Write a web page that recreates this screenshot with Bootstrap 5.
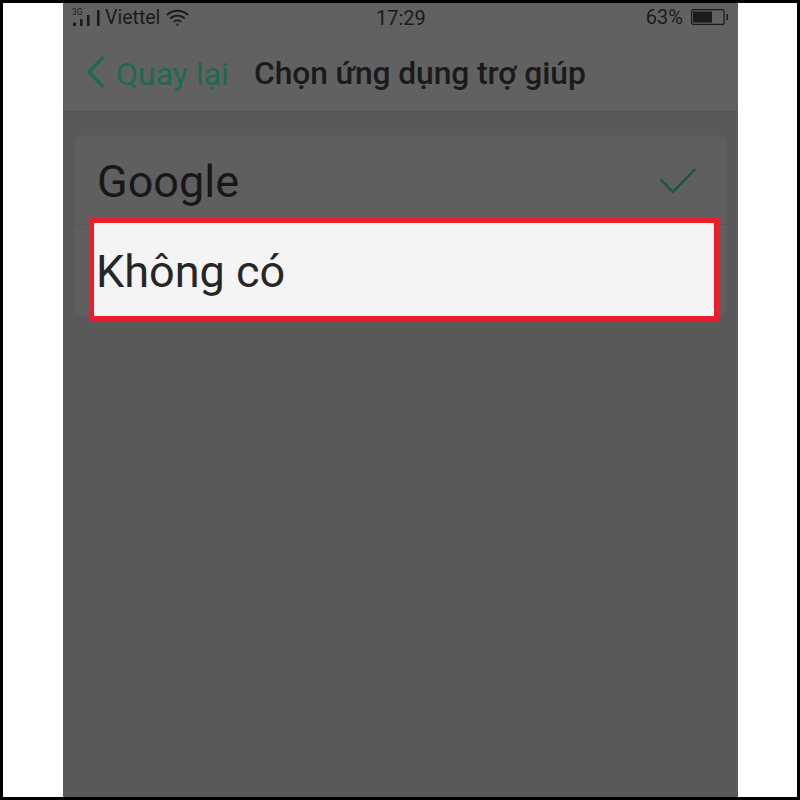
<!DOCTYPE html>
<html lang="vi">
<head>
<meta charset="utf-8">
<title>Chọn ứng dụng trợ giúp</title>
<link href="https://cdn.jsdelivr.net/npm/bootstrap@5.3.0/dist/css/bootstrap.min.css" rel="stylesheet">
<style>
html,body{margin:0;height:800px;overflow:hidden;background:#fff}
body{font-family:Roboto,"Liberation Sans",sans-serif}
.shot{width:800px;height:800px;border:3px solid #000;background:#fff;padding:0 59px 0 60px}
.phone{height:794px;background:#595959;color:#1b1b1b}
.tophead{background:#616161;border-bottom:1px solid #545454;height:109px}
.statusbar{height:28px;padding:0 10px 0 9px;line-height:28px}
.leftstat{width:304px}
.carrier{font-size:19.5px;margin:2px 6px 0 3px}
.wifiicon{margin-top:2px}
.clock{font-size:20px;margin-top:2px}
.batt{font-size:20px}
.navrow{height:80px;padding:6px 0 0 23px}
.backlink{color:#1d6a50;font-size:32px;width:168px;gap:10px}
.backlink svg{margin-bottom:4px}
.apptitle{font-size:31.8px;font-weight:500;color:#1a1a1a;letter-spacing:-.1px}
.listwrap{padding:24px 12px 0}
.optcard{background:#5f5f5f;border-radius:7px;height:179px;box-shadow:0 0 0 1px #5b5b5b}
.optrow{height:89px;padding:2px 30px 0 22px;font-size:45px;line-height:1;border-bottom:1px solid #585858;color:#171717}
.optpick{height:103px;margin:-7px 7px 0 14px;padding:3px 0 0 2px;background:#f4f4f4;border:5px solid #ed1c2b;font-size:45px;line-height:1;color:#262626}
</style>
</head>
<body>
<div class="shot">
  <div class="phone">
    <div class="tophead">
      <div class="statusbar d-flex align-items-center">
        <div class="leftstat d-flex align-items-center">
          <svg width="30" height="22" viewBox="0 0 30 22" fill="#1b1b1b" aria-hidden="true">
            <text x="0" y="9" font-family="Roboto,sans-serif" font-size="8.500">3G</text>
            <rect x="1" y="16.500" width="3" height="3.500"/><rect x="8" y="13" width="2.500" height="7"/><rect x="15" y="9" width="2.500" height="11"/><rect x="25" y="4" width="2.500" height="16"/>
          </svg>
          <span class="carrier">Viettel</span>
          <svg class="wifiicon" width="23" height="18" viewBox="0 0 24 18" fill="none" stroke="#1b1b1b" stroke-width="2" aria-hidden="true">
            <path d="M1 6c6-6 16-6 22 0M4.500 9.500c4-4 11-4 15 0M8 13c2-2 6-2 8 0"/><circle cx="12" cy="16" r="1.200" fill="#1b1b1b" stroke="none"/>
          </svg>
        </div>
        <span class="clock">17:29</span>
        <div class="batt d-flex align-items-center gap-2 ms-auto">
          <span>63%</span>
          <svg width="37" height="16" viewBox="0 0 37 16" aria-hidden="true">
            <rect x=".6" y=".6" width="32.500" height="14.800" rx="2" fill="none" stroke="#1b1b1b" stroke-width="1.200"/>
            <rect x="2" y="2.500" width="19" height="11" fill="#1b1b1b"/>
            <rect x="35.500" y="5" width="1.500" height="6" fill="#1b1b1b"/>
          </svg>
        </div>
      </div>
      <div class="navrow d-flex align-items-center">
        <div class="backlink d-flex align-items-center">
          <svg width="20" height="34" viewBox="0 0 20 34" fill="none" stroke="#1d6a50" stroke-width="3.500" aria-hidden="true"><path d="M17.500 2 3 17l14.500 15"/></svg>
          <span>Quay lại</span>
        </div>
        <div class="apptitle">Chọn ứng dụng trợ giúp</div>
      </div>
    </div>
    <div class="listwrap">
      <div class="optcard">
        <div class="optrow d-flex align-items-center justify-content-between">
          <span>Google</span>
          <svg width="36" height="26" viewBox="0 0 36 26" fill="none" stroke="#1c5640" stroke-width="2.500" aria-hidden="true"><path d="M.8 11.500 13 24 35.200 1"/></svg>
        </div>
        <div class="optpick d-flex align-items-center">Không có</div>
      </div>
    </div>
  </div>
</div>
<script src="https://cdn.jsdelivr.net/npm/bootstrap@5.3.0/dist/js/bootstrap.bundle.min.js"></script>
</body>
</html>
